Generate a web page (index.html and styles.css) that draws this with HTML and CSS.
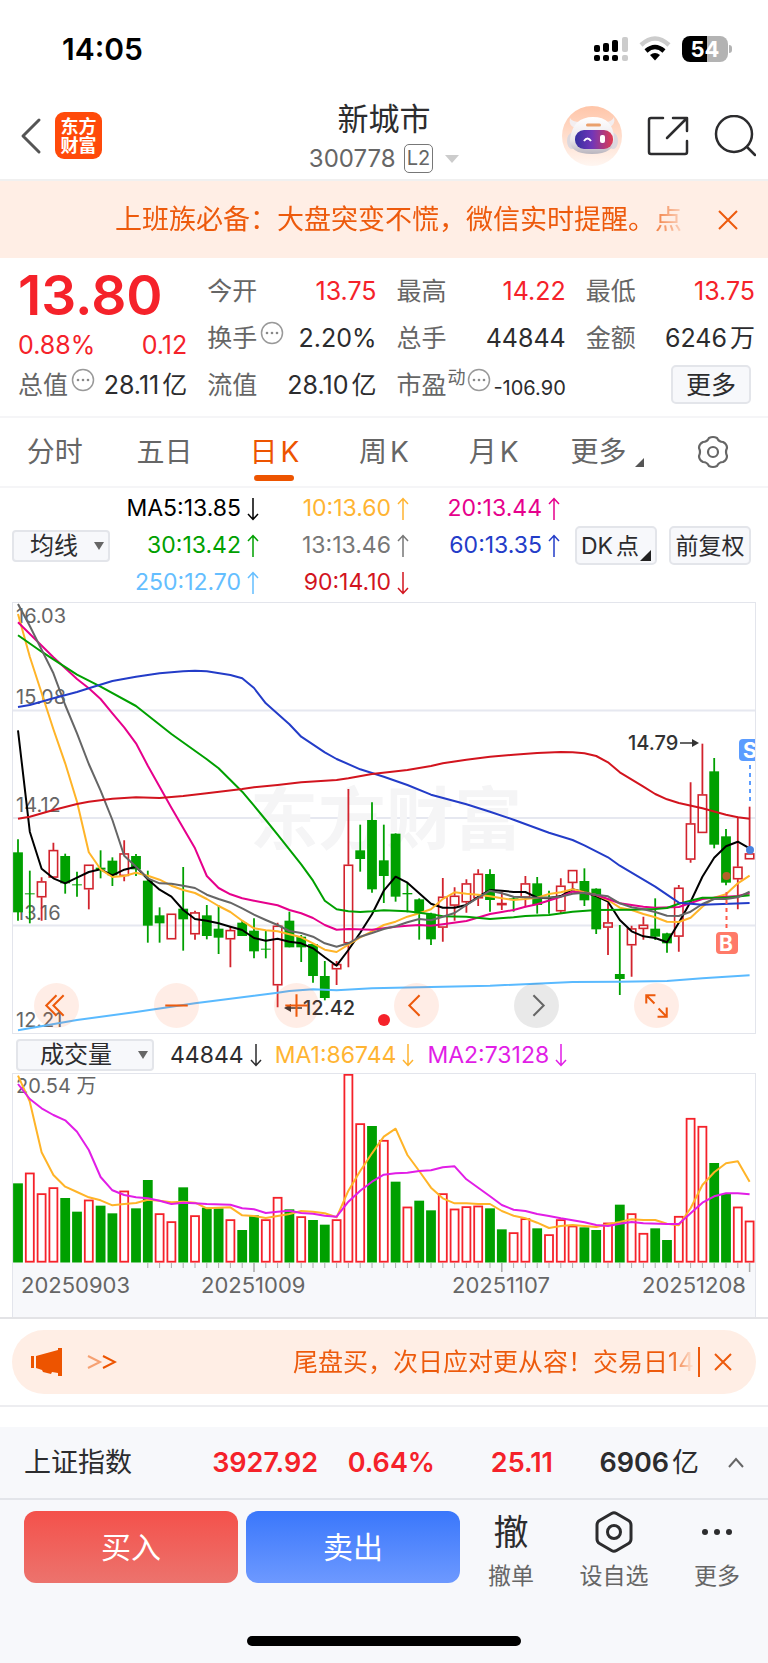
FILE: index.html
```html
<!DOCTYPE html>
<html lang="zh-CN">
<head>
<meta charset="utf-8">
<meta name="viewport" content="width=device-width, initial-scale=1">
<title>新城市 300778</title>
<link rel="stylesheet" href="styles.css">
</head>
<body>
<svg class="defs" aria-hidden="true">
  <symbol id="down" viewBox="0 0 12 24"><path d="M6 1v21M1 17l5 5.500 5-5.500" /></symbol>
  <symbol id="up" viewBox="0 0 12 24"><path d="M6 23V2M1 7l5-5.500L11 7" /></symbol>
  <symbol id="info" viewBox="0 0 24 24"><circle cx="12" cy="12" r="10.500" fill="none" stroke="#999" stroke-width="1.500"/><g fill="#888"><circle cx="7" cy="12" r="1.300"/><circle cx="12" cy="12" r="1.300"/><circle cx="17" cy="12" r="1.300"/></g></symbol>
</svg>

<div class="status">
  <time>14:05</time>
  <div class="status-icons">
    <svg width="34" height="26" viewBox="0 0 34 26"><g fill="#000"><rect x="0" y="9" width="6" height="7" rx="2"/><rect x="9" y="7" width="6" height="9" rx="2"/><rect x="18" y="4" width="6" height="12" rx="2"/><rect x="0" y="19" width="6" height="6" rx="2"/><rect x="9" y="19" width="6" height="6" rx="2"/><rect x="18" y="19" width="6" height="6" rx="2"/></g><g fill="#ccc"><rect x="28" y="1" width="6" height="15" rx="2"/><rect x="28" y="19" width="6" height="6" rx="2"/></g></svg>
    <svg width="32" height="26" viewBox="0 0 32 26" fill="none" stroke-width="4.500"><path d="M2 9Q16-4 30 9" stroke="#ccc"/><path d="M7 15q9-8 18 0" stroke="#000"/><path d="M16 24.500l-5-5.500q5-4 10 0z" fill="#000"/></svg>
    <div class="battery"><span>5</span><span>4</span></div>
  </div>
</div>

<header class="header">
  <div class="header-side">
    <button class="plain back" aria-label="返回"><svg width="22" height="38" viewBox="0 0 22 38" fill="none" stroke="#555" stroke-width="3" stroke-linecap="round" stroke-linejoin="round"><path d="M19 3 3 19l16 16"/></svg></button>
    <a class="logo" href="#"><span>东方</span><span>财富</span></a>
  </div>
  <div class="header-title">
    <h1>新城市</h1>
    <p>300778<span class="level">L2</span><i class="caret"></i></p>
  </div>
  <div class="header-side header-end">
    <button class="plain" aria-label="智能助手">
      <svg width="60" height="60" viewBox="0 0 60 60">
        <defs>
          <linearGradient id="halo" x1="0" y1="0" x2="0" y2="1"><stop offset="0" stop-color="#ffc5a8"/><stop offset="1" stop-color="#fff6f1"/></linearGradient>
          <linearGradient id="visor" x1="0" y1="0" x2="1" y2="0"><stop offset="0" stop-color="#3530a0"/><stop offset=".45" stop-color="#7136b8"/><stop offset="1" stop-color="#e13c50"/></linearGradient>
          <linearGradient id="shell" x1="0" y1="0" x2="0" y2="1"><stop offset="0" stop-color="#fff"/><stop offset=".6" stop-color="#ece8ec"/><stop offset="1" stop-color="#b9b5be"/></linearGradient>
        </defs>
        <circle cx="30" cy="30" r="30" fill="url(#halo)"/>
        <path d="M14 22q-8-2-6-10 2 4 10 4zM46 22q8-3 6-11-2 5-9 5z" fill="#f3eef0"/>
        <ellipse cx="10" cy="35" rx="5" ry="8" fill="#dcd8de"/><ellipse cx="51" cy="35" rx="5" ry="8" fill="#dcd8de"/>
        <path d="M8 33Q11 11 31 11t21 21q1 16-22 16T8 33z" fill="url(#shell)"/>
        <rect x="24" y="17.500" width="15" height="3" rx="1.500" fill="#eaa06c"/>
        <rect x="13" y="24" width="38" height="19" rx="9" fill="url(#visor)"/>
        <path d="M22 35q3.500-5 7 0" fill="none" stroke="#fff" stroke-width="2"/><rect x="38" y="29" width="5" height="8" rx="2" fill="#fff"/>
      </svg>
    </button>
    <button class="plain" aria-label="分享"><svg width="42" height="42" viewBox="0 0 42 42" fill="none" stroke="#2c2c2e" stroke-width="2.500" stroke-linecap="round" stroke-linejoin="round"><path d="M16 3H4q-2 0-2 2v32q0 2 2 2h34q2 0 2-2V26M26 3h14v13M39 4 20 23"/></svg></button>
    <button class="plain" aria-label="搜索"><svg width="42" height="42" viewBox="0 0 42 42" fill="none" stroke="#2c2c2e" stroke-width="2.500" stroke-linecap="round"><circle cx="20" cy="19" r="18"/><path d="M33 32l8 8"/></svg></button>
  </div>
</header>

<section class="notice">
  <a href="#">上班族必备：大盘突变不慌，微信实时提醒。点</a>
  <button class="plain" aria-label="关闭"><svg width="20" height="20" viewBox="0 0 20 20" stroke="#ed5a0c" stroke-width="2"><path d="M1 1l18 18M19 1 1 19"/></svg></button>
</section>

<section class="quote">
  <div class="price">
    <strong>13.80</strong>
    <p><span>0.88%</span><span>0.12</span></p>
  </div>
  <dl><dt>今开</dt><dd class="red">13.75</dd></dl>
  <dl><dt>最高</dt><dd class="red">14.22</dd></dl>
  <dl><dt>最低</dt><dd class="red">13.75</dd></dl>
  <dl><dt>换手<svg class="info"><use href="#info"/></svg></dt><dd>2.20%</dd></dl>
  <dl><dt>总手</dt><dd>44844</dd></dl>
  <dl><dt>金额</dt><dd>6246<span class="unit">万</span></dd></dl>
  <dl><dt>总值<svg class="info"><use href="#info"/></svg></dt><dd>28.11<span class="unit">亿</span></dd></dl>
  <dl><dt>流值</dt><dd>28.10<span class="unit">亿</span></dd></dl>
  <dl><dt>市盈<sup>动</sup><svg class="info tight"><use href="#info"/></svg></dt><dd class="small">-106.90</dd></dl>
  <div class="more"><button class="box">更多</button></div>
</section>

<nav class="tabs">
  <a href="#">分时</a><a href="#">五日</a><a href="#" class="active">日<span class="unit">K</span></a><a href="#">周<span class="unit">K</span></a><a href="#">月<span class="unit">K</span></a><a href="#">更多<i class="corner"></i></a>
  <a href="#" aria-label="设置"><svg width="34" height="34" viewBox="0 0 34 34" fill="none" stroke="#666" stroke-width="2.200" stroke-linejoin="round"><path d="M13 3q4-2 8 0 2 4 6 4 4 2 4 6-2 4 0 8 0 4-4 6-4 0-6 4-4 2-8 0-2-4-6-4-4-2-4-6 2-4 0-8 0-4 4-6 4 0 6-4z"/><circle cx="17" cy="17" r="5"/></svg></a>
</nav>

<section class="averages">
  <label class="picker"><select aria-label="主图指标"><option>均线</option></select><i></i></label>
  <ul>
    <li class="c5">MA5:13.85<svg><use href="#down"/></svg></li>
    <li class="c10">10:13.60<svg><use href="#up"/></svg></li>
    <li class="c20">20:13.44<svg><use href="#up"/></svg></li>
    <li class="c30">30:13.42<svg><use href="#up"/></svg></li>
    <li class="c13">13:13.46<svg><use href="#up"/></svg></li>
    <li class="c60">60:13.35<svg><use href="#up"/></svg></li>
    <li class="c250">250:12.70<svg><use href="#up"/></svg></li>
    <li class="c90">90:14.10<svg><use href="#down"/></svg></li>
  </ul>
  <button class="box dk">DK<span class="unit">点</span><i class="corner"></i></button>
  <button class="box">前复权</button>
</section>

<section class="chart">
  <svg id="kline" viewBox="1 1 742 430" role="img" aria-label="日K线"></svg>
  <div class="controls">
    <button aria-label="最左"><svg viewBox="0 0 44 44"><path d="M22 12 12 22l10 10M29 12 19 22l10 10"/></svg></button>
    <button aria-label="缩小"><svg viewBox="0 0 44 44"><path d="M11 22h22"/></svg></button>
    <button aria-label="放大"><svg viewBox="0 0 44 44"><path d="M11 22h22M22 11v22"/></svg></button>
    <button aria-label="左移"><svg viewBox="0 0 44 44"><path d="M25 12 15 22l10 10"/></svg></button>
    <button class="off" aria-label="右移"><svg viewBox="0 0 44 44"><path d="M19 12l10 10-10 10"/></svg></button>
    <button aria-label="全屏"><svg viewBox="0 0 44 44"><path d="M12 20v-8h9M12 12l8 8M24 25l8 8M32 24v9h-9"/></svg></button>
  </div>
</section>

<section class="volume-head">
  <label class="picker wide"><select aria-label="副图指标"><option>成交量</option></select><i></i></label>
  <span>44844<svg><use href="#down"/></svg></span>
  <span class="c10">MA1:86744<svg><use href="#down"/></svg></span>
  <span class="cv2">MA2:73128<svg><use href="#down"/></svg></span>
</section>

<section class="chart volume">
  <svg id="volume" viewBox="1 1 742 243" role="img" aria-label="成交量"></svg>
</section>

<section class="promo">
  <div class="pill">
    <svg width="32" height="28" viewBox="0 0 32 28" fill="#ed5400"><path d="M0 8h3v12H0zM5 8 27 2V0h4v28h-4v-3l-6-1-1 2-8-2-1-2-6-2z"/></svg>
    <svg width="30" height="16" viewBox="0 0 30 16" fill="none" stroke="#ed5400" stroke-width="2"><path d="M1 2l12 6-12 6" opacity=".5"/><path d="M16 2l12 6-12 6"/></svg>
    <a href="#">尾盘买，次日应对更从容！交易日14</a>
    <button class="plain" aria-label="关闭"><svg width="18" height="18" viewBox="0 0 18 18" stroke="#ed5a0c" stroke-width="2"><path d="M1 1l16 16M17 1 1 17"/></svg></button>
  </div>
</section>

<section class="index">
  <span class="index-name">上证指数</span>
  <b class="red">3927.92</b><b class="red">0.64%</b><b class="red">25.11</b><b>6906<span class="unit">亿</span></b>
  <button class="plain" aria-label="展开"><svg width="16" height="12" viewBox="0 0 16 12" fill="none" stroke="#666" stroke-width="2"><path d="M1 10l7-8 7 8"/></svg></button>
</section>

<footer class="trade">
  <button class="buy">买入</button>
  <button class="sell">卖出</button>
  <a href="#"><span class="glyph">撤</span>撤单</a>
  <a href="#"><svg width="40" height="42" viewBox="0 0 40 42" fill="none" stroke="#2c2c2e" stroke-width="3" stroke-linejoin="round"><path d="M17.500 2.500q2.500-1.400 5 0l12 7q2.500 1.500 2.500 4.500v14q0 3-2.500 4.500l-12 7q-2.500 1.400-5 0l-12-7Q3 31 3 28V14q0-3 2.500-4.500z"/><circle cx="20" cy="21" r="6.500"/></svg>设自选</a>
  <a href="#"><svg width="32" height="42" viewBox="0 0 32 42" fill="#2c2c2e"><circle cx="4" cy="21" r="3"/><circle cx="16" cy="21" r="3"/><circle cx="28" cy="21" r="3"/></svg>更多</a>
</footer>
<div class="home"><i></i></div>
<script src="chart.js"></script>
</body>
</html>
```
FILE: styles.css
```css
* { box-sizing: border-box; }
body { margin: 0; background: #fff; color: #2c2c2e; font-family: Inter, "Noto Sans CJK SC", sans-serif; font-size: 24px; line-height: 32px; }
h1, p, dl, dd, ul { margin: 0; padding: 0; }
ul { list-style: none; }
a { color: inherit; text-decoration: none; }
button, select { font: inherit; color: inherit; }
svg { display: block; flex: none; }
.defs { position: absolute; width: 0; height: 0; }
.plain { display: flex; padding: 0; border: 0; background: none; }
.red { color: #f5222a; }
.unit { margin-left: 3px; }

.status { display: flex; justify-content: space-between; align-items: center; height: 98px; padding: 0 40px 0 62px; color: #000; }
.status time { font-size: 30px; font-weight: 600; }
.status-icons { display: flex; align-items: center; gap: 11px; }
.battery { position: relative; display: flex; justify-content: center; width: 46px; height: 26px; border-radius: 8px; background: linear-gradient(90deg, #000 54%, #b3b3b3 54%); color: #fff; font-size: 22px; line-height: 26px; font-weight: 700; }
.battery::after { content: ""; position: absolute; left: 47px; top: 9px; width: 3px; height: 8px; border-radius: 0 3px 3px 0; background: #b3b3b3; }

.header { display: grid; grid-template-columns: 1fr auto 1fr; align-items: center; height: 83px; padding: 0 12px; border-bottom: 2px solid #f0f0f0; }
.header-side { display: flex; align-items: center; gap: 13px; padding-bottom: 6px; }
.header-end { justify-content: flex-end; gap: 25px; }
.back { margin-left: 8px; }
.logo { display: flex; flex-direction: column; align-items: center; justify-content: center; width: 47px; height: 47px; border-radius: 9px; background: #ff4a0a; color: #fff; font-size: 18px; line-height: 19px; font-weight: 700; }
.header-title { text-align: center; }
.header-title h1 { font-size: 31px; line-height: 40px; font-weight: 400; }
.header-title p { display: flex; align-items: center; justify-content: center; gap: 8px; font-size: 24px; line-height: 40px; color: #666; }
.level { padding: 0 2px; border: 1px solid #777; border-radius: 5px; font-size: 20px; line-height: 27px; }
.caret { margin-left: 4px; border: 7px solid transparent; border-top: 8px solid #ccc; border-bottom: 0; }

.notice { display: flex; align-items: center; justify-content: space-between; height: 77px; padding: 0 30px 0 115px; gap: 28px; background: #ffeee5; color: #ed5a0c; font-size: 27px; }
.notice a { flex: 1; overflow: hidden; white-space: nowrap; -webkit-mask-image: linear-gradient(90deg, #000 92%, transparent); mask-image: linear-gradient(90deg, #000 92%, transparent); }

.quote { display: grid; grid-template-columns: repeat(4, minmax(0, 1fr)); grid-auto-rows: 47px; column-gap: 20px; padding: 9px 13px 8px 18px; border-bottom: 2px solid #f5f5f7; font-size: 25px; }
.price { grid-row: span 2; color: #f5222a; }
.price strong { display: block; font-size: 55px; line-height: 56px; font-weight: 600; }
.price p { display: flex; justify-content: space-between; line-height: 44px; }
.quote dl { display: flex; align-items: center; justify-content: space-between; white-space: nowrap; }
.quote dt { display: flex; align-items: center; color: #666; }
.quote sup { align-self: flex-start; margin-left: 1px; font-size: 18px; line-height: 20px; }
.quote .small { align-self: flex-end; font-size: 20px; line-height: 40px; }
.info { width: 24px; height: 24px; margin: 0 0 10px 3px; }
.info.tight { margin-left: 1px; }
.more { display: flex; align-items: center; justify-content: flex-end; padding-right: 4px; }
.box { padding: 0; border: 2px solid #e3e5ea; border-radius: 5px; background: #f7f8fb; white-space: nowrap; }
.more .box { width: 80px; height: 39px; }

.tabs { display: flex; height: 70px; border-bottom: 2px solid #f5f5f7; font-size: 28px; color: #666; }
.tabs a { position: relative; flex: 1; display: flex; align-items: center; justify-content: center; }
.tabs .active { color: #ed5400; }
.tabs .active::after { content: ""; position: absolute; left: calc(50% - 20px); bottom: 5px; width: 40px; height: 6px; border-radius: 3px; background: #ed5400; }
.corner { align-self: flex-end; border-left: 9px solid transparent; border-bottom: 9px solid #555; }
.tabs .corner { margin: 0 -8px 19px 9px; }

.averages { display: flex; align-items: center; gap: 12px; height: 114px; padding: 1px 17px 0 12px; }
.averages ul { flex: 1; display: grid; grid-template-columns: 137px 150px 151px; justify-content: start; line-height: 37px; font-size: 23px; }
.averages li { display: flex; justify-content: flex-end; align-items: center; white-space: nowrap; }
.averages li svg, .volume-head span svg { width: 12px; height: 24px; margin-left: 6px; fill: none; stroke: currentColor; stroke-width: 1.500px; }
.picker { position: relative; flex: none; width: 98px; height: 32px; }
.picker select { width: 100%; height: 100%; padding: 0 0 0 16px; border: 2px solid #e3e5ea; border-radius: 4px; background: #f7f8fb; line-height: 28px; appearance: none; }
.picker i { position: absolute; right: 6px; top: 12px; border: 5px solid transparent; border-top: 8px solid #666; border-bottom: 0; }
.averages .box { flex: none; width: 82px; height: 39px; font-size: 23px; }
.averages .dk { position: relative; padding-right: 12px; }
.dk .corner { position: absolute; right: 4px; bottom: 2px; border-left-width: 11px; border-bottom: 11px solid #222; }
.c5 { color: #000; } .c10 { color: #ffb432; } .c20 { color: #e6008c; } .c30 { color: #00a000; }
.c13 { color: #777; } .c60 { color: #233cc8; } .c250 { color: #64beff; } .c90 { color: #d2141e; } .cv2 { color: #e11ee6; }

.chart { position: relative; margin: 0 12px; border: 1px solid #e3e5ec; }
.chart > svg { width: 100%; height: auto; overflow: hidden; }
.chart text { font-size: 20px; fill: #666; }
.chart .mark { font-weight: 500; fill: #333; }
.chart .badge { font-size: 21px; font-weight: 700; fill: #fff; }
.chart .date { font-size: 22px; }
.chart .water { font-size: 68px; font-weight: 700; fill: #f5f5f6; }
.controls { position: absolute; left: 2.8%; right: 10.3%; bottom: 5px; display: flex; justify-content: space-between; }
.controls button { width: 45px; height: 45px; padding: 0; border: 0; border-radius: 50%; background: rgba(255, 110, 50, .12); }
.controls svg { width: 100%; height: 100%; fill: none; stroke: #ed5a0c; stroke-width: 2px; }
.controls .off { background: rgba(40, 40, 40, .1); }
.controls .off svg { stroke: #666; }

.volume-head { display: flex; align-items: center; gap: 13px; height: 39px; padding: 3px 16px 0; font-size: 23px; }
.volume-head span { display: flex; align-items: center; }
.picker.wide { width: 138px; font-size: 24px; }
.picker.wide select { padding-left: 22px; }
.volume-head .picker { margin-right: 3px; }
.volume { border-bottom: 0; }

.promo { padding: 11px 12px; border-top: 2px solid #e3e3e6; border-bottom: 2px solid #ededf0; margin-bottom: 20px; }
.pill { display: flex; align-items: center; height: 64px; padding: 0 24px 0 19px; border-radius: 32px; background: #ffeee5; color: #ed5a0c; font-size: 25px; }
.pill > svg + svg { margin-left: 24px; }
.pill a { flex: 1; margin-left: 176px; overflow: hidden; white-space: nowrap; border-right: 2px solid #ed5a0c; line-height: 30px; background: linear-gradient(90deg, #ed5a0c 93%, #ffeee5 99%); -webkit-background-clip: text; background-clip: text; color: transparent; }
.pill button { margin-left: 14px; }

.index { display: grid; grid-template-columns: 294fr 117fr 118fr 146fr 45fr; grid-auto-flow: column; align-items: center; height: 73px; padding: 0 24px; border-bottom: 2px solid #e3e5ea; background: #f7f8fb; font-size: 27px; }
.index-name, .index b:nth-child(2) { grid-row: 1; grid-column: 1; }
.index b { font-weight: 600; text-align: right; }
.index .unit { font-weight: 400; }
.index button { justify-content: flex-end; }

.trade { display: grid; grid-template-columns: 214fr 214fr 86fr 104fr 86fr; column-gap: 8px; padding: 11px 8px 0 24px; background: #f7f8fb; }
.trade button { height: 72px; border: 0; border-radius: 12px; color: #fff; font-size: 30px; }
.buy { background: linear-gradient(#f4514b, #ec736d); }
.sell { background: linear-gradient(#3a77fb, #6d99ff); }
.trade a { display: flex; flex-direction: column; align-items: center; gap: 7px; font-size: 23px; color: #666; white-space: nowrap; }
.glyph { font-size: 35px; line-height: 42px; color: #2c2c2e; }
.home { display: flex; justify-content: center; padding: 44px 0 17px; background: #f7f8fb; }
.home i { width: 274px; height: 10px; border-radius: 5px; background: #000; }
```
FILE: chart.js
```js
// Coordinates are stored at three units per drawn pixel.
const STEP = 35.4;
const px = i => ((18 + i * STEP) / 3).toFixed(1);

// kind, high, body top, body bottom, low
const candles = `g 718 757 937 962|g 812 880 883 970|r 832 844 892 962|r 728 750 833 835|g 761 768 850 881|g 815 853 856 890|r 794 794 868 928|g 751 803 809 835|g 772 782 826 858|r 721 760 828 844|g 762 768 808 828|g 812 842 977 1028|g 922 946 970 1028|r 941 941 1018 1018|g 801 926 958 1052|r 932 937 1003 1019|g 915 946 1008 1018|g 915 986 1013 1062|r 980 990 1018 1102|g 962 968 1008 1008|g 955 992 1054 1075|g 990 1046 1049 1075|r 968 977 1156 1222|g 935 962 1042 1042|g 1005 1010 1042 1086|g 1030 1032 1128 1148|g 1083 1128 1194 1201|r 1083 1092 1108 1155|r 567 794 1030 1102|g 674 751 777 815|g 607 660 868 878|g 674 781 828 909|g 700 701 890 905|g 848 879 883 937|g 895 898 940 1019|g 938 941 1018 1035|r 834 890 983 1025|r 862 887 917 962|r 838 850 907 938|r 808 821 895 918|g 808 822 900 935|r 875 909 914 930|g 890 895 899 935|r 828 850 893 922|g 831 850 915 941|g 872 890 893 941|r 835 857 934 941|r 810 810 849 868|g 805 843 901 918|g 865 866 988 1002|r 910 967 983 1065|g 975 1122 1137 1185|r 977 985 1036 1130|r 950 974 987 1019|g 895 986 1010 1020|g 998 1000 1030 1058|r 855 863 1010 1055|r 547 670 779 788|r 431 583 699 699|g 474 514 734 745|g 687 709 848 856|r 650 800 838 928|r 620 760 778 778`
  .split('|').map(s => s.split(' ').map((v, n) => n ? +v : v));

const averages = {
  '#5abaff': '0:1291 5:1260 10:1236 15:1210 20:1187 22:1178 23:1173 25:1168 27:1171 30:1165 40:1157 47:1146 51:1145 55:1143 58:1135 60:1130 62:1126',
  '#000': '0:391 1:695 2:806 3:835 4:850 5:833 6:816 7:808 8:826 9:809 10:800 11:838 12:869 13:890 14:930 15:957 16:962 17:970 18:980 19:990 20:1014 21:1022 22:1016 23:1025 24:1030 25:1045 26:1072 27:1097 28:1050 29:998 30:943 31:872 32:830 33:848 34:880 35:911 36:923 37:923 38:915 39:890 40:870 41:872 42:876 43:876 44:893 45:895 46:888 47:868 48:877 49:888 50:905 51:960 52:994 53:1009 54:1014 55:1027 56:968 57:905 58:830 59:773 60:739 61:725 62:745',
  '#ffb428': '0:42 1:170 3:388 4:490 5:605 6:757 7:808 8:831 9:828 10:818 11:827 12:839 13:857 14:870 15:879 16:897 17:918 18:936 19:962 20:985 21:991 22:994 23:1003 24:1012 25:1030 26:1049 27:1056 28:1034 29:1012 30:994 31:975 32:965 33:950 34:940 35:928 36:897 37:877 38:881 39:884 40:889 41:895 42:900 43:897 44:893 45:882 46:877 47:868 48:877 49:885 50:900 51:923 52:930 53:942 54:952 55:965 56:966 57:953 58:920 59:893 60:883 61:850 62:827',
  '#e6008c': '0:67 3:172 5:237 6:265 7:297 8:340 9:382 10:430 11:497 13:623 15:745 16:828 17:864 18:883 19:895 20:902 21:909 22:916 23:930 24:940 25:954 26:975 27:989 28:987 30:989 31:985 32:980 33:977 34:975 35:977 36:973 38:963 40:942 41:936 42:930 43:920 44:913 46:890 47:875 48:879 49:885 50:897 51:910 53:920 54:923 56:921 57:909 58:897 59:893 60:890 61:888 62:880',
  '#00a000': '0:106 2:155 3:178 5:224 7:260 10:318 13:402 16:478 17:505 18:540 19:575 20:617 21:660 22:704 24:793 25:842 26:902 27:928 28:934 29:936 30:934 31:931 33:934 35:943 36:949 38:950 40:957 42:952 43:948 45:945 47:935 49:930 52:929 54:927 55:924 56:911 58:893 60:893 62:886',
  '#666': '0:12 1:78 3:220 4:315 5:400 6:492 7:572 8:660 9:767 10:800 11:835 12:850 13:851 14:857 15:864 16:884 17:897 18:908 19:925 20:944 21:960 22:975 23:993 24:999 25:1010 26:1030 27:1040 28:1030 29:1010 30:999 31:987 32:979 33:967 34:957 35:961 36:950 37:939 38:915 39:893 40:872 41:880 42:890 43:892 44:893 45:893 46:890 47:881 48:878 49:884 50:889 51:910 52:922 53:928 54:936 55:947 56:948 57:935 58:912 59:897 60:897 61:892 62:875',
  '#233cc8': '0:321 1:315 3:295 5:276 6:265 8:243 10:230 12:220 14:214 15:212 16:214 18:225 19:235 20:264 21:310 23:373 24:410 26:457 27:477 29:508 31:530 33:555 35:584 38:613 40:635 42:659 45:698 47:720 48:736 50:772 51:797 54:860 56:908 58:914 62:909',
  '#d2141e': '0:656 1:650 3:630 5:612 6:605 8:596 10:592 12:594 14:588 16:580 19:567 20:562 22:555 24:547 27:540 28:535 30:522 33:510 35:498 36:490 38:479 40:470 42:464 44:459 46:456 47:457 48:460 49:468 50:487 51:517 53:560 54:582 55:598 56:609 58:625 60:644 61:652 62:656'
};

const volumes = 'g445 r413 r475 r457 g489 g530 r494 g512 g535 r467 g520 g435 r535 r559 g457 r541 g518 g520 r553 g585 g541 r553 r486 g523 r544 g555 g569 r553 r117 r265 g273 r315 g440 r515 g497 g526 r475 r521 r514 r512 g520 g583 r592 r550 g580 r598 r553 r572 g577 g585 r563 g509 r535 r594 g580 g615 r543 r249 r273 g384 g477 r515 r557'.split(' ');

const volumeAverages = {
  '#ffb428': '0:122 1:200 2:352 3:420 4:455 5:471 6:487 7:496 8:511 9:507 10:504 11:494 12:497 13:502 14:500 15:503 16:520 17:518 18:517 19:541 20:543 21:549 22:543 23:537 24:528 25:530 26:535 27:547 28:467 29:408 30:355 31:305 32:281 33:360 34:408 35:458 36:490 37:505 38:505 39:507 40:507 41:528 42:542 43:550 44:563 45:579 46:573 47:570 48:573 49:576 50:568 51:561 52:553 53:555 54:555 55:566 56:571 57:520 58:450 59:412 60:385 61:379 62:440',
  '#e11ee6': '0:147 1:192 2:220 3:240 4:256 5:290 6:345 7:426 8:466 9:480 10:487 11:490 12:497 13:507 14:503 15:505 16:507 18:509 19:520 20:523 21:534 22:530 23:527 24:534 25:536 26:542 27:545 28:500 29:467 30:440 31:419 32:415 33:413 34:408 35:406 36:397 37:394 38:433 39:458 40:484 41:510 42:524 43:528 44:537 45:543 46:550 47:556 48:562 49:570 50:573 51:566 52:561 53:565 55:567 56:567 57:535 58:503 59:484 60:475 61:475 62:478'
};

const GREEN = '#00a000';
const lines = (set, top) => Object.entries(set).map(([color, data]) => {
  const points = data.split(' ').map(p => {
    const [i, v] = p.split(':');
    return px(+i) + ',' + (v / 3 - top).toFixed(1);
  }).join(' ');
  return `<polyline points="${points}" fill="none" stroke="${color}" stroke-width="2" stroke-linejoin="round"/>`;
}).join('');
const text = (x, y, s, cls = '') => `<text x="${x}" y="${y}" class="${cls}">${s}</text>`;

let k = '<path d="M0 108.500H744M0 216H744M0 323.500H744" stroke="#e6e8f0" stroke-width="2"/>';
k += text(238, 242, '东方财富', 'water');
k += text(4, 21, '16.03') + text(4, 102, '15.08') + text(4, 210, '14.12') + text(4, 318, '13.16') + text(4, 425, '12.21');
candles.forEach(([kind, ...v], i) => {
  const x = +px(i);
  const [h, t, b, l] = v.map(n => n / 3 - 2);
  if (kind === 'g') {
    k += `<path d="M${x} ${h}V${l}" stroke="${GREEN}" stroke-width="1.800"/><rect x="${x - 4.9}" y="${t}" width="9.800" height="${b - t}" fill="${GREEN}"/>`;
  } else {
    k += `<path d="M${x} ${h}V${t}M${x} ${b}V${l}" stroke="#d2232d" stroke-width="1.800"/><rect x="${x - 4.2}" y="${t + 0.6}" width="8.400" height="${Math.max(b - t - 1.2, 1)}" fill="none" stroke="#d2232d" stroke-width="1.600"/>`;
  }
});
k += lines(averages, 2);
k += text(616, 148, '14.79', 'mark') + text(291, 413, '12.42', 'mark');
k += '<path d="M668 141h15M290 406h-14" stroke="#333" stroke-width="1.500"/><path d="M680 137l7 4-7 4zM279 402l-7 4 7 4z" fill="#333"/>';
k += '<circle cx="372" cy="418" r="6" fill="#f5222a"/>';
k += '<path d="M738 163v38" stroke="#5b9cff" stroke-width="2" stroke-dasharray="4 4"/><circle cx="738" cy="248" r="4" fill="#4a84e0"/><rect x="727" y="137" width="22" height="22" rx="4" fill="#5b9cff"/>' + text(731, 156, 'S', 'badge');
k += '<path d="M714.500 290v38" stroke="#ff5a4a" stroke-width="2" stroke-dasharray="4 4"/><circle cx="714.500" cy="274" r="4" fill="#b4602a"/><rect x="704" y="330" width="22" height="22" rx="4" fill="#ff7a68"/>' + text(707, 349, 'B', 'badge');
document.getElementById('kline').innerHTML = k;

let v = '<rect y="189.500" width="744" height="55" fill="#f7f8fb"/>' + text(4, 20, '20.54 万');
volumes.forEach((bar, i) => {
  const x = +px(i), y = bar.slice(1) / 3 - 38, h = 189.5 - y;
  v += bar[0] === 'g'
    ? `<rect x="${x - 4.9}" y="${y}" width="9.800" height="${h}" fill="${GREEN}"/>`
    : `<rect x="${x - 4}" y="${y + 0.8}" width="8" height="${h - 1.6}" fill="#fff" stroke="#f5222a" stroke-width="1.800"/>`;
  if (i > 10) v += `<path d="M${x} 190v${i % 21 === 20 ? 9 : 5}" stroke="#aaa" stroke-width="${i % 21 === 20 ? 1.5 : 1}"/>`;
});
v += lines(volumeAverages, 38);
v += text(9, 220, '20250903', 'date') + text(189, 220, '20251009', 'date') + text(440, 220, '20251107', 'date') + text(630, 220, '20251208', 'date');
document.getElementById('volume').innerHTML = v;
```
